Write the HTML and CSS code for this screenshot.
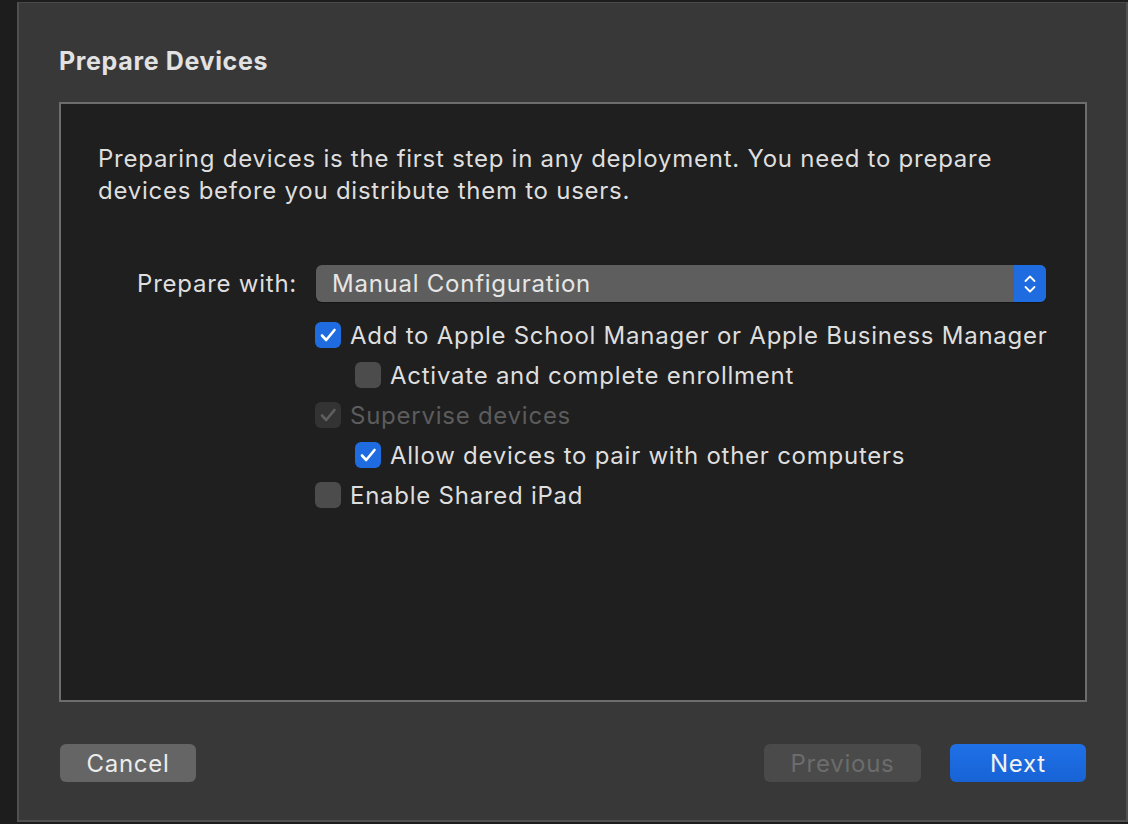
FILE: index.html
```html
<!DOCTYPE html>
<html>
<head>
<meta charset="utf-8">
<link rel="stylesheet" href="styles.css">
</head>
<body>
<div class="window">
  <h1 class="title">Prepare Devices</h1>
  <div class="box">
    <p class="intro">Preparing devices is the first step in any deployment. You need to prepare devices before you distribute them to users.</p>
    <div class="form">
      <div class="label">Prepare with:</div>
      <div class="popup">
        <span class="popup-text">Manual Configuration</span>
        <span class="popup-arrows">
          <svg width="16" height="22" viewBox="0 0 16 22"><path d="M3.5 8 L8 3.5 L12.5 8" fill="none" stroke="#fff" stroke-width="1.8" stroke-linecap="round" stroke-linejoin="round"/><path d="M3.5 14 L8 18.5 L12.5 14" fill="none" stroke="#fff" stroke-width="1.8" stroke-linecap="round" stroke-linejoin="round"/></svg>
        </span>
      </div>
      <div class="checks">
        <div class="row">
          <span class="cb on"><svg viewBox="0 0 26 26"><path d="M7 13.5 L11.2 18 L19.5 8" fill="none" stroke="#fff" stroke-width="2.6" stroke-linecap="round" stroke-linejoin="round"/></svg></span>
          <span class="cb-label">Add to Apple School Manager or Apple Business Manager</span>
        </div>
        <div class="row sub">
          <span class="cb"></span>
          <span class="cb-label">Activate and complete enrollment</span>
        </div>
        <div class="row disabled">
          <span class="cb dis"><svg viewBox="0 0 26 26"><path d="M7 13.5 L11.2 18 L19.5 8" fill="none" stroke="#5f5f5f" stroke-width="2.6" stroke-linecap="round" stroke-linejoin="round"/></svg></span>
          <span class="cb-label">Supervise devices</span>
        </div>
        <div class="row sub">
          <span class="cb on"><svg viewBox="0 0 26 26"><path d="M7 13.5 L11.2 18 L19.5 8" fill="none" stroke="#fff" stroke-width="2.6" stroke-linecap="round" stroke-linejoin="round"/></svg></span>
          <span class="cb-label">Allow devices to pair with other computers</span>
        </div>
        <div class="row">
          <span class="cb"></span>
          <span class="cb-label">Enable Shared iPad</span>
        </div>
      </div>
    </div>
  </div>
  <div class="footer">
    <button class="btn cancel">Cancel</button>
    <div class="spacer"></div>
    <button class="btn prev">Previous</button>
    <button class="btn next">Next</button>
  </div>
</div>
</body>
</html>
```
FILE: styles.css
```css
html, body {
  margin: 0;
  padding: 0;
  background: #1d1d1d;
  width: 1128px;
  height: 824px;
  overflow: hidden;
  font-family: Inter, "Open Sans", sans-serif;
}
.window {
  box-sizing: border-box;
  margin: 2px 0 0 17px;
  width: 1111px;
  height: 820px;
  background: #383838;
  border-left: 2px solid #505050;
  border-top: 1px solid #4a4a4a;
  border-right: 2px solid #505050;
  border-bottom: 2px solid #505050;
  padding: 0 40px 0 40px;
  display: flex;
  flex-direction: column;
}
.title {
  margin: 41px 0 0 0;
  font-size: 25px;
  line-height: 34px;
  font-weight: 700;
  letter-spacing: 0.65px;
  color: #e2e2e2;
  height: 58px;
}
.box {
  box-sizing: border-box;
  height: 600px;
  margin-right: -1px;
  background: #1f1f1f;
  border: 2px solid #6d6d6d;
  padding: 39px 39px 0 37px;
}
.intro {
  margin: 0;
  font-size: 24px;
  letter-spacing: 0.75px;
  line-height: 32px;
  color: #dedede;
  width: 920px;
}
.form {
  margin-top: 58px;
  display: grid;
  grid-template-columns: 199px minmax(0, 1fr);
  column-gap: 19px;
  row-gap: 20px;
  align-items: center;
}
.label {
  text-align: right;
  font-size: 24px;
  letter-spacing: 0.75px;
  color: #dedede;
  white-space: nowrap;
}
.popup {
  height: 37px;
  border-radius: 6px;
  background: #5e5e5e;
  display: flex;
  align-items: center;
  overflow: hidden;
  box-shadow: 0 1px 1px rgba(0,0,0,0.3);
}
.popup-text {
  flex: 1;
  padding-left: 16px;
  font-size: 24px;
  letter-spacing: 0.75px;
  color: #e6e6e6;
  white-space: nowrap;
}
.popup-arrows {
  width: 32px;
  height: 100%;
  background: #1f6be0;
  display: flex;
  align-items: center;
  justify-content: center;
}
.checks {
  grid-column: 2;
  margin-left: -1px;
  display: flex;
  flex-direction: column;
}
.row {
  height: 40px;
  display: flex;
  align-items: center;
  margin-top: -7px;
}
.row + .row { margin-top: 0; }
.row.sub { padding-left: 40px; }
.cb {
  width: 26px;
  height: 26px;
  border-radius: 6px;
  background: #4c4c4c;
  flex: none;
  display: flex;
}
.cb svg { width: 26px; height: 26px; }
.cb.on { background: #1f6be0; }
.cb.dis { background: #333333; }
.cb-label {
  margin-left: 9px;
  font-size: 24px;
  letter-spacing: 0.75px;
  color: #dedede;
  white-space: nowrap;
}
.disabled .cb-label { color: #5c5c5c; }
.footer {
  margin-top: 42px;
  display: flex;
  align-items: center;
}
.spacer { flex: 1; }
.btn {
  height: 38px;
  border: none;
  border-radius: 6px;
  font-family: Inter, "Open Sans", sans-serif;
  font-size: 24px;
  letter-spacing: 0.75px;
  padding: 0;
}
.cancel {
  margin-left: 1px;
  width: 136px;
  background: #656565;
  color: #ececec;
}
.prev {
  width: 157px;
  background: #4a4a4a;
  color: #6c6c6c;
}
.next {
  margin-left: 29px;
  width: 136px;
  background: linear-gradient(#2070e6, #1763d6);
  color: #f2f2f2;
}
```
